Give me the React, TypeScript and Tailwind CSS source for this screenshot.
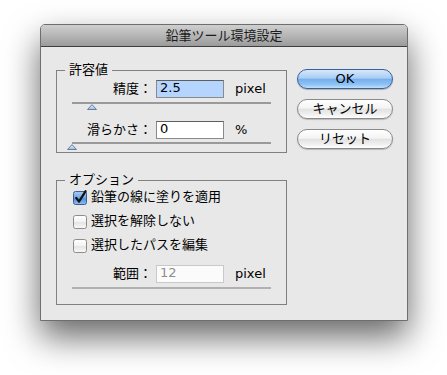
import React from 'react';

const font = "font-['DejaVu_Sans','Noto_Sans_CJK_JP',sans-serif]";

function Thumb({ className }: { className: string }) {
  return (
    <svg width="10" height="6" viewBox="0 0 10 6" className={className}>
      <defs>
        <linearGradient id="thumbfill" x1="0" y1="0" x2="0" y2="1">
          <stop offset="0" stopColor="#e4eefa" />
          <stop offset="1" stopColor="#9dbde6" />
        </linearGradient>
      </defs>
      <polygon points="0.5,5.5 5,0.6 9.5,5.5" fill="url(#thumbfill)" stroke="#6a7e9c" strokeWidth="1" />
    </svg>
  );
}

function CheckBox({ checked }: { checked?: boolean }) {
  if (checked) {
    return (
      <svg width="15" height="15" viewBox="0 0 15 15" className="shrink-0 overflow-visible">
        <defs>
          <linearGradient id="cbon" x1="0" y1="0" x2="0" y2="1">
            <stop offset="0" stopColor="#a9cbf1" />
            <stop offset="0.5" stopColor="#6ea5e6" />
            <stop offset="0.55" stopColor="#4f8fdc" />
            <stop offset="1" stopColor="#8fc0f3" />
          </linearGradient>
        </defs>
        <rect x="0.5" y="1.5" width="13" height="13" rx="2" fill="url(#cbon)" stroke="#3d5f94" />
        <path d="M3.2 7.8 L6 11.6 L12.6 1.2" fill="none" stroke="#111" strokeWidth="2.2" strokeLinecap="round" strokeLinejoin="round" />
      </svg>
    );
  }
  return (
    <svg width="15" height="15" viewBox="0 0 15 15" className="shrink-0">
      <defs>
        <linearGradient id="cboff" x1="0" y1="0" x2="0" y2="1">
          <stop offset="0" stopColor="#ffffff" />
          <stop offset="0.5" stopColor="#f2f2f2" />
          <stop offset="0.55" stopColor="#e4e4e4" />
          <stop offset="1" stopColor="#fafafa" />
        </linearGradient>
      </defs>
      <rect x="0.5" y="1.5" width="13" height="13" rx="2" fill="url(#cboff)" stroke="#8c8c8c" />
    </svg>
  );
}

function NumberRow({ label, value, unit, variant }: { label: string; value: string; unit: string; variant: 'focus' | 'normal' | 'disabled' }) {
  const box =
    variant === 'focus'
      ? 'bg-[#b5d5ff] border-[#8a8a8a] border-t-[#5e5e5e] text-black'
      : variant === 'normal'
        ? 'bg-white border-[#8a8a8a] border-t-[#5e5e5e] text-black'
        : 'bg-[#fbfbfb] border-[#c9c9c9] text-[#8e8e8e]';
  return (
    <div className="flex items-center h-[18px]">
      <div className="w-[80px] text-right whitespace-nowrap">{label}</div>
      <div className={`ml-[4px] w-[68px] h-[18px] border px-[3px] leading-[13px] ${box}`}>{value}</div>
      <div className="ml-[11px]">{unit}</div>
    </div>
  );
}

function Option({ label, checked }: { label: string; checked?: boolean }) {
  return (
    <div className="flex items-center h-[18px] pl-[1px]">
      <CheckBox checked={checked} />
      <span className="ml-[3px] whitespace-nowrap">{label}</span>
    </div>
  );
}

function AquaButton({ children, primary }: { children: React.ReactNode; primary?: boolean }) {
  return (
    <button
      className={
        primary
          ? 'h-[20px] w-[96px] rounded-full border border-[#36609e] bg-[linear-gradient(to_bottom,#d7e8fb_0%,#a8cdf4_45%,#76afee_52%,#8ec2f4_80%,#bfe0fd_100%)] text-black leading-[18px] shadow-[0_1px_1px_rgba(0,0,0,0.25)]'
          : 'h-[20px] w-[96px] rounded-full border border-[#8a8a8a] bg-[linear-gradient(to_bottom,#ffffff_0%,#f4f4f4_45%,#e2e2e2_52%,#f0f0f0_80%,#ffffff_100%)] text-black leading-[18px] shadow-[0_1px_1px_rgba(0,0,0,0.2)]'
      }
    >
      {children}
    </button>
  );
}

export default function App() {
  return (
    <div className={`w-[447px] h-[375px] bg-white pt-[24px] pl-[40px] text-[13px] text-black ${font}`}>
      <div className="w-[368px] rounded-t-[5px] border border-[#6e6e6e] bg-[#e8e8e8] shadow-[0_16px_34px_rgba(0,0,0,0.6)] overflow-hidden">
        {/* title bar */}
        <div className="h-[22px] border-b border-[#3f3f3f] bg-[linear-gradient(to_bottom,#cfcfcf_0%,#b6b6b6_50%,#9b9b9b_100%)] flex items-center justify-center text-[#1c1c1c] leading-[20px]">
          鉛筆ツール環境設定
        </div>

        <div className="flex pt-[15px] pb-[15px] pl-[15px]">
          <div className="w-[231px] flex flex-col">
            <fieldset className="border border-[#808080]">
              <legend className="ml-[8px] px-[4px] leading-[16px]">許容値</legend>
              <div className="px-[15px] pt-[2px] pb-[2px]">
                <NumberRow label="精度：" value="2.5" unit="pixel" variant="focus" />
                <div className="mt-[4px] h-[2px] bg-[#9a9a9a]" />
                <Thumb className="block ml-[15px]" />
                <div className="mt-[11px]">
                  <NumberRow label="滑らかさ：" value="0" unit="%" variant="normal" />
                </div>
                <div className="mt-[3px] h-[2px] bg-[#9a9a9a]" />
                <Thumb className="block -ml-[5px]" />
              </div>
            </fieldset>

            <fieldset className="mt-[19px] border border-[#808080]">
              <legend className="ml-[8px] px-[4px] leading-[16px]">オプション</legend>
              <div className="px-[15px] pb-[15px] flex flex-col">
                <Option label="鉛筆の線に塗りを適用" checked />
                <div className="mt-[6px]">
                  <Option label="選択を解除しない" />
                </div>
                <div className="mt-[6px]">
                  <Option label="選択したパスを編集" />
                </div>
                <div className="mt-[11px]">
                  <NumberRow label="範囲：" value="12" unit="pixel" variant="disabled" />
                </div>
                <div className="mt-[4px] h-[2px] bg-[#b0b0b0]" />
              </div>
            </fieldset>
          </div>

          <div className="ml-[10px] mt-[7px] flex flex-col gap-[10px]">
            <AquaButton primary>OK</AquaButton>
            <AquaButton>キャンセル</AquaButton>
            <AquaButton>リセット</AquaButton>
          </div>
        </div>
      </div>
    </div>
  );
}
